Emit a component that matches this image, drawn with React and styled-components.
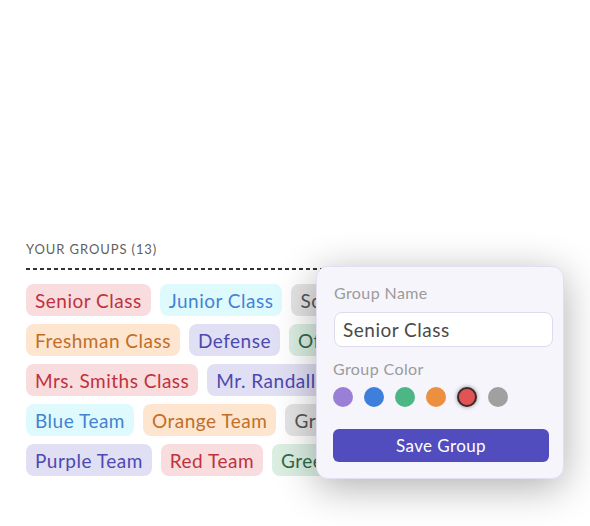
import React from 'react';
import styled, { createGlobalStyle } from 'styled-components';

const GlobalStyle = createGlobalStyle`
    body {
        margin: 0;
        background: #ffffff;
        font-family: 'Lato', 'Noto Sans', sans-serif;
    }
`;

const palette = {
    red: { bg: '#f9dcdd', fg: '#bf323d' },
    blue: { bg: '#dffafd', fg: '#4482d2' },
    gray: { bg: '#e4e4e4', fg: '#555555' },
    orange: { bg: '#fde5d0', fg: '#c06f28' },
    purple: { bg: '#e1dff3', fg: '#4c49b0' },
    green: { bg: '#dbeee2', fg: '#2f6a48' },
};

const rows = [
    [
        { name: 'Senior Class', color: 'red' },
        { name: 'Junior Class', color: 'blue' },
        { name: 'Sophomore Class', color: 'gray' },
    ],
    [
        { name: 'Freshman Class', color: 'orange' },
        { name: 'Defense', color: 'purple' },
        { name: 'Offense', color: 'green' },
    ],
    [
        { name: 'Mrs. Smiths Class', color: 'red' },
        { name: 'Mr. Randall’s Class', color: 'purple' },
    ],
    [
        { name: 'Blue Team', color: 'blue' },
        { name: 'Orange Team', color: 'orange' },
        { name: 'Gray Team', color: 'gray' },
    ],
    [
        { name: 'Purple Team', color: 'purple' },
        { name: 'Red Team', color: 'red' },
        { name: 'Green Team', color: 'green' },
    ],
];

const swatches = ['#9a7fd6', '#3f7fdc', '#4cb784', '#ec8f3e', '#e25454', '#a0a0a0'];

const Page = styled.div`
    position: relative;
    width: 590px;
    height: 526px;
    box-sizing: border-box;
    padding: 241px 0 0 26px;
    overflow: hidden;
`;

const Heading = styled.div`
    font-size: 13px;
    line-height: 16px;
    letter-spacing: 0.9px;
    color: #5f5f5f;
    text-transform: uppercase;
`;

const Dashed = styled.div`
    margin-top: 11px;
    width: 300px;
    height: 2px;
    background: repeating-linear-gradient(to right, #333 0 4px, transparent 4px 7px);
`;

const TagList = styled.div`
    display: flex;
    flex-direction: column;
    gap: 8px;
    margin-top: 14px;
`;

const TagRow = styled.div`
    display: flex;
    gap: 9px;
`;

const Tag = styled.span`
    display: inline-flex;
    align-items: center;
    height: 32px;
    padding: 0 9px;
    border-radius: 8px;
    font-size: 19px;
    letter-spacing: 0.5px;
    white-space: nowrap;
    background: ${(p) => palette[p.$color].bg};
    color: ${(p) => palette[p.$color].fg};
`;

const Popover = styled.div`
    position: absolute;
    left: 316px;
    top: 266px;
    width: 248px;
    box-sizing: border-box;
    padding: 16px 15px 16px 16px;
    background: #f6f5fc;
    border: 1px solid #e2dff2;
    border-radius: 12px;
    box-shadow: 0 8px 40px rgba(0, 0, 0, 0.32);
    display: flex;
    flex-direction: column;
`;

const Label = styled.div`
    font-size: 16px;
    line-height: 20px;
    letter-spacing: 0.4px;
    color: #9b9b9b;
    padding-left: ${(p) => p.$indent || 0}px;
`;

const Input = styled.input`
    margin-top: 9px;
    height: 35px;
    box-sizing: border-box;
    width: 219px;
    margin-left: 1px;
    padding: 0 8px;
    border: 1px solid #dedbf1;
    border-radius: 8px;
    background: #ffffff;
    font-family: inherit;
    font-size: 19px;
    letter-spacing: 0.5px;
    color: #4a4a4a;
    outline: none;
`;

const ColorLabel = styled(Label)`
    margin-top: 12px;
`;

const Swatches = styled.div`
    display: flex;
    gap: 11px;
    margin-top: 8px;
`;

const Swatch = styled.span`
    width: 20px;
    height: 20px;
    box-sizing: border-box;
    border-radius: 50%;
    background: ${(p) => p.$color};
    border: ${(p) => (p.$active ? '2px solid #3b2a2c' : 'none')};
    box-shadow: ${(p) => (p.$active ? '0 0 4px rgba(0, 0, 0, 0.45)' : 'none')};
`;

const SaveButton = styled.button`
    margin-top: 22px;
    width: 216px;
    height: 33px;
    border: none;
    border-radius: 6px;
    background: #524dbe;
    color: #ffffff;
    font-family: inherit;
    font-size: 17px;
    letter-spacing: 0.4px;
    cursor: pointer;
`;

export default function App() {
    return (
        <>
            <GlobalStyle />
            <Page>
                <Heading>Your Groups (13)</Heading>
                <Dashed />
                <TagList>
                    {rows.map((row, i) => (
                        <TagRow key={i}>
                            {row.map((t) => (
                                <Tag key={t.name} $color={t.color}>
                                    {t.name}
                                </Tag>
                            ))}
                        </TagRow>
                    ))}
                </TagList>
                <Popover>
                    <Label $indent={1}>Group Name</Label>
                    <Input defaultValue='Senior Class' />
                    <ColorLabel>Group Color</ColorLabel>
                    <Swatches>
                        {swatches.map((c, i) => (
                            <Swatch key={c} $color={c} $active={i === 4} />
                        ))}
                    </Swatches>
                    <SaveButton>Save Group</SaveButton>
                </Popover>
            </Page>
        </>
    );
}
